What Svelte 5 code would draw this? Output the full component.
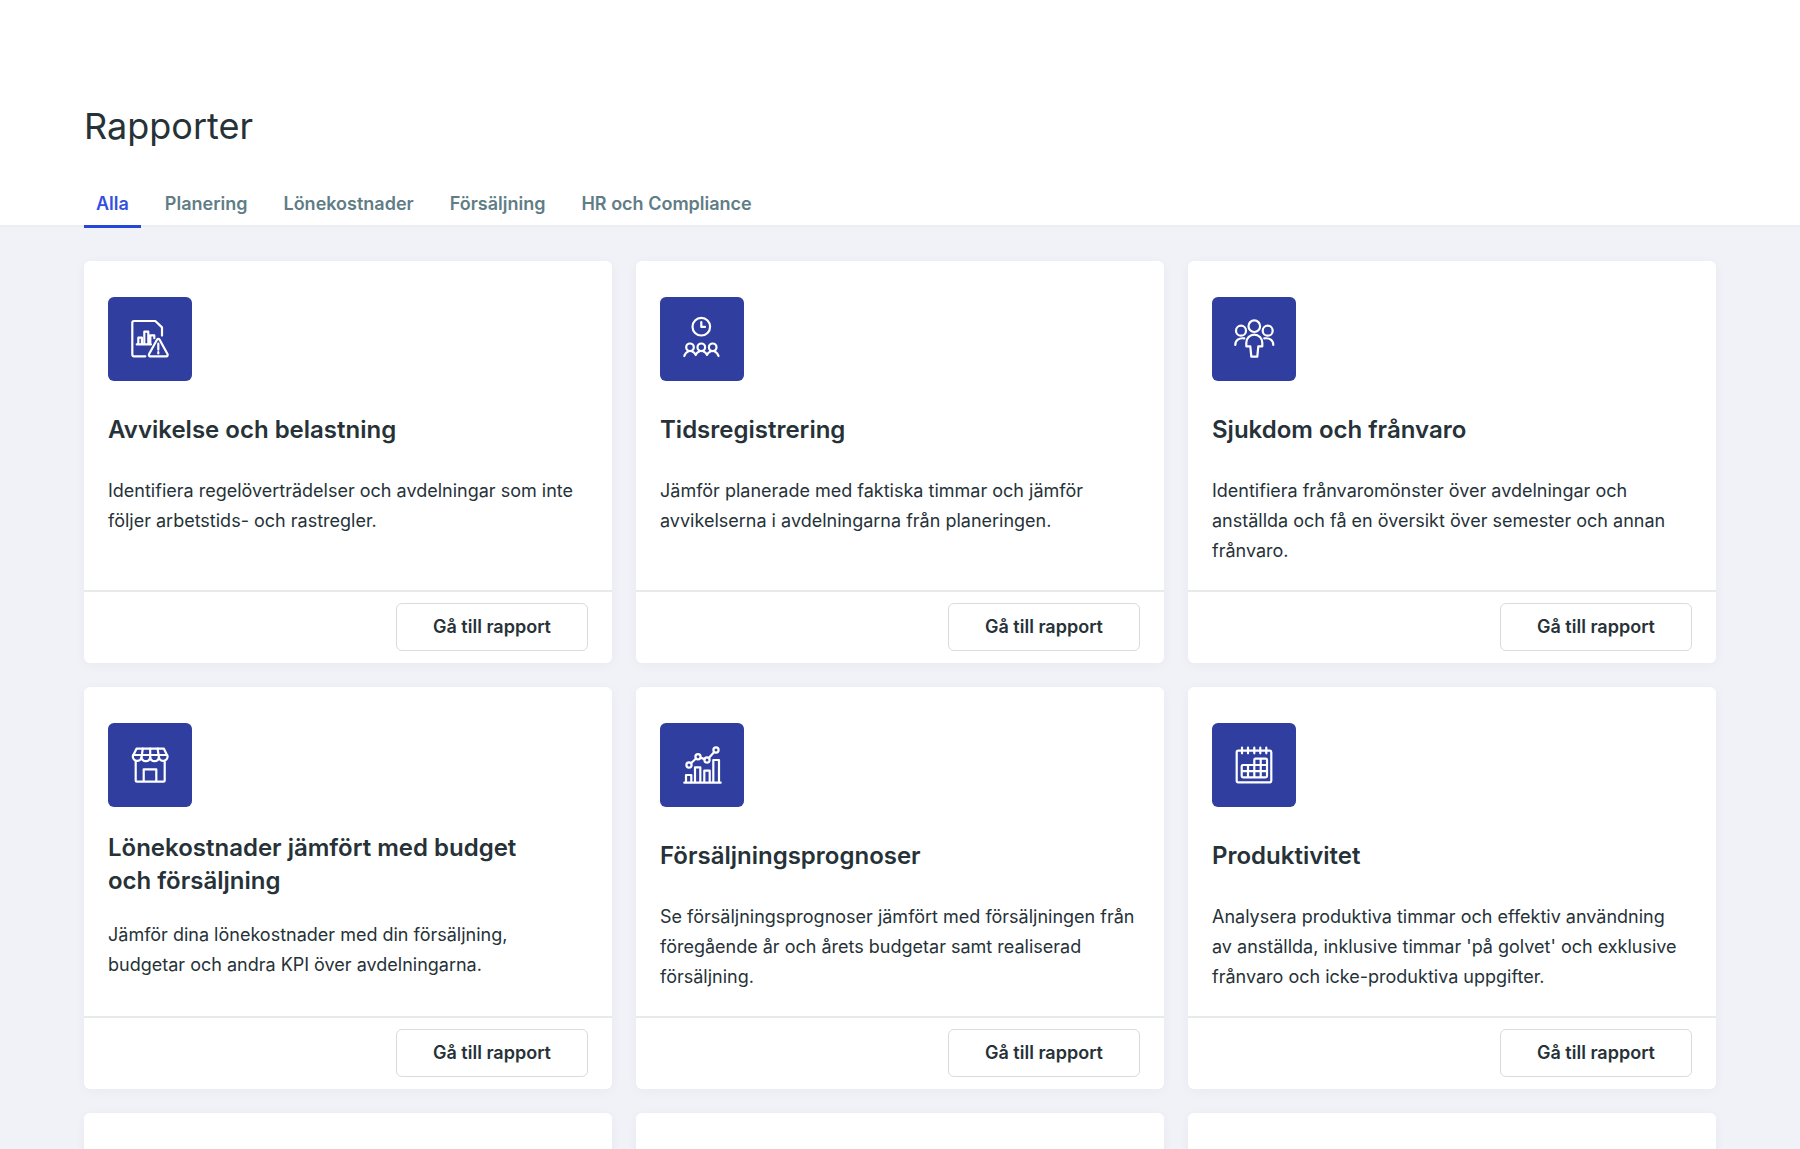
<script>
  const tabs = ['Alla', 'Planering', 'Lönekostnader', 'Försäljning', 'HR och Compliance'];
  let active = $state('Alla');

  const reports = [
    {
      icon: 'deviation',
      title: 'Avvikelse och belastning',
      text: 'Identifiera regelöverträdelser och avdelningar som inte följer arbetstids- och rastregler.'
    },
    {
      icon: 'time',
      title: 'Tidsregistrering',
      text: 'Jämför planerade med faktiska timmar och jämför avvikelserna i avdelningarna från planeringen.'
    },
    {
      icon: 'people',
      title: 'Sjukdom och frånvaro',
      text: 'Identifiera frånvaromönster över avdelningar och anställda och få en översikt över semester och annan frånvaro.'
    },
    {
      icon: 'store',
      title: 'Lönekostnader jämfört med budget och försäljning',
      text: 'Jämför dina lönekostnader med din försäljning, budgetar och andra KPI över avdelningarna.'
    },
    {
      icon: 'chart',
      title: 'Försäljningsprognoser',
      text: 'Se försäljningsprognoser jämfört med försäljningen från föregående år och årets budgetar samt realiserad försäljning.'
    },
    {
      icon: 'calendar',
      title: 'Produktivitet',
      text: "Analysera produktiva timmar och effektiv användning av anställda, inklusive timmar 'på golvet' och exklusive frånvaro och icke-produktiva uppgifter."
    }
  ];
</script>

{#snippet glyph(name)}
  <svg class="icon" viewBox="0 0 84 84" aria-hidden="true">
    {#if name === 'deviation'}
      <path d="M37.3 59.3H26a1.7 1.7 0 0 1-1.7-1.7V25.7A1.7 1.7 0 0 1 26 24h21.3l6.7 6.4v8.2" />
      <path d="M28.7 47.3H43M30.3 47v-6.3h3.6V47M36.3 47V34.7h4V47M42.3 46v-7.6h4v2.8" />
      <path d="M49.1 42.5a1.4 1.4 0 0 1 2.4 0l8.1 14.8a1.4 1.4 0 0 1-1.2 2H42.2a1.4 1.4 0 0 1-1.2-2z" />
      <path d="M50.3 46.7v6M50.3 55.2v1.2" />
    {:else if name === 'time'}
      <circle cx="41.3" cy="29.7" r="8.8" />
      <path d="M41.3 25v4.9H45" />
      <circle cx="30" cy="50.3" r="3.8" />
      <circle cx="41.3" cy="50.3" r="3.8" />
      <circle cx="52.7" cy="50.3" r="3.8" />
      <path d="M24.3 59c.7-2.4 2-3.9 4.2-4.8M31.7 54.2c2.1.8 3.4 2 4 3.8.6-1.8 1.8-3 3.9-3.8M43.1 54.2c2.1.8 3.3 2 3.9 3.8.6-1.8 1.9-3 4-3.8M54.3 54.2c2.2.9 3.5 2.4 4.2 4.8" />
    {:else if name === 'people'}
      <circle cx="42.3" cy="29.2" r="5.8" />
      <circle cx="29" cy="33.7" r="5" />
      <circle cx="55.7" cy="33.7" r="5" />
      <path d="M34.3 49.3v-3.6a8 8 0 0 1 16 0v3.6h-4l-1 10.4h-6l-1-10.4z" />
      <path d="M23.3 48c0-4.7 3.6-7.4 9-6.6M61.3 48c0-4.7-3.6-7.4-9-6.6" />
    {:else if name === 'store'}
      <path d="M28.5 25.7h27.4l3.7 7.6a4.4 4.4 0 0 1-8.7 1.1 4.4 4.4 0 0 1-8.7 0 4.4 4.4 0 0 1-8.7 0 4.4 4.4 0 0 1-8.7-1.1z" />
      <path d="M25.2 32h34M34.8 25.7l-1.3 8.7M42.2 25.7v8.7M49.6 25.7l1.3 8.7" />
      <path d="M27.7 38.5v18.8c0 .9.5 1.4 1.4 1.4h26.2c.9 0 1.4-.5 1.4-1.4V38.5M35.7 58.7V46.3h12.6v12.4" />
    {:else if name === 'chart'}
      <path d="M24.3 59.7h36.4M26 59.5V52h5.3v7.5M35 59.5V44.3h5.3v15.2M44.3 59.5V47.7h5.4v11.8M53.3 59.5V37H59v22.5" />
      <circle cx="29" cy="42" r="2.6" />
      <circle cx="38" cy="33.7" r="2.6" />
      <circle cx="47" cy="37" r="2.6" />
      <circle cx="56" cy="27" r="2.6" />
      <path d="M30.9 40.2l5.2-4.7M40.4 34.6l4.2 1.5M48.8 35l5.4-6" />
    {:else}
      <rect x="24.7" y="27.7" width="34.6" height="31.6" rx="1.5" />
      <path d="M30 24.7v5.6M36 24.7v5.6M42.3 24.7v5.6M48.3 24.7v5.6M54.3 24.7v5.6" />
      <path d="M31 42h24M42.3 42v-5c0-.8.5-1.3 1.3-1.3h10.1c.8 0 1.3.5 1.3 1.3v16c0 .8-.5 1.3-1.3 1.3H31c-.8 0-1.3-.5-1.3-1.3v-9.7c0-.8.5-1.3 1.3-1.3M29.7 48.2H55M36 42v12.3M42.3 42v12.3M48.7 35.7v18.6" />
    {/if}
  </svg>
{/snippet}

<div class="page">
  <header>
    <h1>Rapporter</h1>
    <nav aria-label="Rapportkategorier">
      {#each tabs as tab}
        <button class="tab" class:active={active === tab} onclick={() => (active = tab)}>{tab}</button>
      {/each}
    </nav>
  </header>

  <main>
    {#each reports as report}
      <article>
        <div class="body">
          {@render glyph(report.icon)}
          <div class="title"><h2>{report.title}</h2></div>
          <p>{report.text}</p>
        </div>
        <footer>
          <button class="go">Gå till rapport</button>
        </footer>
      </article>
    {/each}
    <!-- Next row of cards, cut off by the bottom of the window -->
    {#each [1, 2, 3] as slot (slot)}
      <article class="upcoming"></article>
    {/each}
  </main>
</div>

<style>
  :global(body) {
    margin: 0;
    background: #f1f2f8;
  }

  .page {
    height: 100vh;
    overflow: hidden;
    font-family: Inter, 'Liberation Sans', sans-serif;
    color: #263238;
  }

  header {
    padding: 104px 84px 0;
    background: #fff;
    border-bottom: 2px solid #edeef1;
  }

  h1 {
    margin: 0 0 32px;
    font-size: 36px;
    line-height: 44px;
    font-weight: 400;
  }

  nav {
    display: flex;
    gap: 12px;
    margin-bottom: -3px;
  }

  button {
    font-family: inherit;
    cursor: pointer;
  }

  .tab {
    padding: 11px 12px 8px;
    border: 0;
    border-bottom: 3px solid transparent;
    background: none;
    font-size: 18px;
    line-height: 26px;
    font-weight: 600;
    color: #607d86;
  }

  .tab.active {
    color: #3350e2;
    border-bottom-color: #2646d8;
  }

  main {
    display: grid;
    grid-template-columns: repeat(3, minmax(0, 1fr));
    gap: 24px;
    padding: 34px 84px;
  }

  article {
    display: flex;
    flex-direction: column;
    background: #fff;
    border-radius: 6px;
    box-shadow: 0 2px 12px rgba(38, 50, 56, 0.04);
  }

  .upcoming {
    min-height: 402px;
  }

  .body {
    flex: 1;
    padding: 36px 24px 24px;
  }

  .icon {
    display: block;
    width: 84px;
    height: 84px;
    border-radius: 6px;
    background: #303f9f;
    fill: none;
    stroke: #fff;
    stroke-width: 2.2;
    stroke-linecap: round;
    stroke-linejoin: round;
  }

  .title {
    display: flex;
    align-items: center;
    min-height: 48px;
    margin: 24px 0 23px;
  }

  h2 {
    margin: 0;
    max-width: 440px;
    font-size: 24px;
    line-height: 33px;
    font-weight: 600;
  }

  p {
    margin: 0;
    padding-right: 4px;
    font-size: 18px;
    line-height: 30px;
  }

  footer {
    display: flex;
    justify-content: flex-end;
    padding: 11px 24px 12px;
    border-top: 2px solid #e8e9ea;
  }

  .go {
    min-width: 192px;
    height: 48px;
    padding: 0 24px 2px;
    border: 1px solid #d9dcde;
    border-radius: 6px;
    background: #fff;
    font-size: 18px;
    font-weight: 600;
    color: #263238;
  }
</style>
